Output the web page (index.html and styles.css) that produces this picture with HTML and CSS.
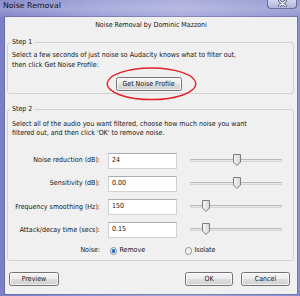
FILE: index.html
```html
<!DOCTYPE html>
<html>
<head>
<meta charset="utf-8">
<link rel="stylesheet" href="styles.css">
</head>
<body>
<div class="window">
  <div class="titlebar">
    <span class="title">Noise Removal</span>
    <div class="close">
      <svg width="9" height="7" viewBox="0 0 9 7"><path d="M1.5 1 L7.5 6 M7.5 1 L1.5 6" stroke="#3a3d5c" stroke-width="2.6" stroke-linecap="round"/><path d="M1.5 1 L7.5 6 M7.5 1 L1.5 6" stroke="#fff" stroke-width="1.3" stroke-linecap="round"/></svg>
    </div>
  </div>
  <div class="client">
    <div class="header">Noise Removal by Dominic Mazzoni</div>

    <fieldset class="group group-step1">
      <legend>Step 1</legend>
      <p class="desc">Select a few seconds of just noise so Audacity knows what to filter out,<br>then click Get Noise Profile:</p>
      <div class="profile-row">
        <span class="highlight">
          <button class="btn btn-profile">Get Noise Profile</button>
          <svg class="ring" width="92" height="34" viewBox="0 0 92 34"><ellipse cx="45.5" cy="16.8" rx="44.3" ry="15.8" fill="none" stroke="#e3212b" stroke-width="1.5"/></svg>
        </span>
      </div>
    </fieldset>

    <fieldset class="group group-step2">
      <legend>Step 2</legend>
      <p class="desc">Select all of the audio you want filtered, choose how much noise you want<br>filtered out, and then click 'OK' to remove noise.</p>
      <div class="controls">
        <label class="lbl">Noise reduction (dB):</label>
        <div class="field">24</div>
        <div class="slider"><div class="track"></div><svg class="thumb" style="left:51%" width="8" height="12" viewBox="0 0 8 12"><defs><linearGradient id="tg" x1="0" y1="0" x2="1" y2="0"><stop offset="0" stop-color="#f6f6f6"/><stop offset="1" stop-color="#d4d4d4"/></linearGradient></defs><path d="M0.5 0.5 H7.5 V8 L4 11.5 L0.5 8 Z" fill="url(#tg)" stroke="#7d7d7d"/></svg></div>

        <label class="lbl">Sensitivity (dB):</label>
        <div class="field">0.00</div>
        <div class="slider"><div class="track"></div><svg class="thumb" style="left:51%" width="8" height="12" viewBox="0 0 8 12"><path d="M0.5 0.5 H7.5 V8 L4 11.5 L0.5 8 Z" fill="url(#tg)" stroke="#7d7d7d"/></svg></div>

        <label class="lbl">Frequency smoothing (Hz):</label>
        <div class="field">150</div>
        <div class="slider"><div class="track"></div><svg class="thumb" style="left:17%" width="8" height="12" viewBox="0 0 8 12"><path d="M0.5 0.5 H7.5 V8 L4 11.5 L0.5 8 Z" fill="url(#tg)" stroke="#7d7d7d"/></svg></div>

        <label class="lbl">Attack/decay time (secs):</label>
        <div class="field">0.15</div>
        <div class="slider"><div class="track"></div><svg class="thumb" style="left:17%" width="8" height="12" viewBox="0 0 8 12"><path d="M0.5 0.5 H7.5 V8 L4 11.5 L0.5 8 Z" fill="url(#tg)" stroke="#7d7d7d"/></svg></div>

        <label class="lbl lbl-noise">Noise:</label>
        <div class="radios">
          <span class="opt opt-remove"><span class="radio checked"></span>Remove</span>
          <span class="opt"><span class="radio"></span>Isolate</span>
        </div>
      </div>
    </fieldset>

    <div class="buttons">
      <button class="btn btn-preview">Preview</button>
      <div class="spacer"></div>
      <button class="btn btn-ok">OK</button>
      <button class="btn btn-cancel">Cancel</button>
    </div>
  </div>
</div>
</body>
</html>
```

FILE: styles.css
```css
* { box-sizing: border-box; }
html, body { margin: 0; padding: 0; }
body {
  width: 300px;
  height: 296px;
  overflow: hidden;
  font-family: "DejaVu Sans Condensed", "DejaVu Sans", sans-serif;
  font-stretch: condensed;
  font-size: 7px;
  color: #151515;
}
.window {
  width: 300px;
  height: 296px;
  display: flex;
  flex-direction: column;
  background: linear-gradient(90deg, #7b7fc4 0%, #989cd6 35%, #a4a7da 60%, #8b8fcd 100%);
}
.titlebar {
  height: 17px;
  flex: none;
  display: flex;
  justify-content: space-between;
  align-items: flex-start;
  padding: 0 3px 0 3px;
  background: linear-gradient(180deg, rgba(255,255,255,0.10), rgba(255,255,255,0.22) 50%, rgba(255,255,255,0.05));
}
.title {
  font-family: "DejaVu Sans", sans-serif;
  font-stretch: normal;
  font-size: 7.8px;
  line-height: 10px;
  padding-top: 1px;
  color: #101018;
}
.close {
  width: 30px;
  height: 10px;
  margin-top: -1px;
  border: 1px solid rgba(45, 45, 90, 0.6);
  border-top: none;
  border-radius: 0 0 4px 4px;
  background: linear-gradient(180deg, #d8daf0, #b0b3dc);
  display: flex;
  align-items: center;
  justify-content: center;
}
.client {
  flex: 1;
  margin: 0 3px 2px 5px;
  background: #f0f0f0;
  display: flex;
  flex-direction: column;
  box-shadow: 0 0 0 1px rgba(70, 70, 120, 0.35);
}
.header {
  text-align: center;
  padding-top: 3.5px;
  line-height: 9px;
}
.group {
  margin: 0 3px 0 2px;
  border: 1px solid #d3d3d3;
  border-radius: 3px;
  padding: 0 11px 0 4px;
  min-width: 0;
}
.group legend {
  padding: 0 2px;
  margin-left: -2px;
  line-height: 9px;
}
.group-step1 {
  margin-top: 8px;
  padding-top: 4.5px;
  padding-bottom: 2px;
}
.group-step2 {
  margin-top: 11px;
  padding-top: 6px;
  padding-bottom: 4px;
}
.desc {
  margin: 0;
  line-height: 9.5px;
  white-space: nowrap;
}
.profile-row {
  margin-top: 6.75px;
  display: flex;
  justify-content: center;
}
.highlight {
  position: relative;
  display: inline-block;
  margin-left: 3px;
}
.ring {
  position: absolute;
  left: -10px;
  top: -10px;
}
.btn {
  font-family: inherit;
  font-stretch: inherit;
  font-size: 7px;
  color: #151515;
  height: 14px;
  padding: 0;
  border: 1px solid #737373;
  border-radius: 2.5px;
  background: linear-gradient(180deg, #f4f4f4 0%, #ececec 48%, #dedede 52%, #d0d0d0 100%);
  box-shadow: inset 0 0 0 1px rgba(255,255,255,0.7);
  display: block;
}
.btn-profile { width: 66px; }
.controls {
  margin-top: 13.75px;
  display: grid;
  grid-template-columns: 88px 69px 92px;
  column-gap: 8px;
  row-gap: 7.33px;
  align-items: center;
}
.controls > .slider { margin-left: 5px; }
.lbl {
  text-align: right;
  white-space: nowrap;
  line-height: 9px;
}
.field {
  height: 16px;
  background: #fff;
  border: 1px solid #cfd1d7;
  border-top-color: #abadb3;
  padding-left: 3px;
  line-height: 13px;
}
.slider {
  position: relative;
  height: 16px;
  width: 92px;
}
.track {
  margin-top: 6px;
  height: 3px;
  border: 1px solid #d6d6d6;
  border-top-color: #b8b8b8;
  background: #e8eaea;
  border-radius: 1px;
}
.thumb {
  position: absolute;
  top: 1px;
  margin-left: -4px;
}
.radios {
  grid-column: 2 / span 2;
  display: flex;
  align-items: center;
  height: 10px;
  padding-left: 1.5px;
}
.opt {
  display: flex;
  align-items: center;
  gap: 2.5px;
  line-height: 9px;
}
.opt-remove { width: 75px; }
.radio {
  width: 7.5px;
  height: 7.5px;
  border-radius: 50%;
  border: 1px solid #8f9090;
  background: radial-gradient(circle, #e6e6e6 0%, #f8f8f8 70%);
}
.radio.checked {
  background: radial-gradient(circle, #1c5fa8 0%, #3b86cf 45%, #e8eef3 55%, #f5f5f5 100%);
}
.buttons {
  margin-top: 11px;
  display: flex;
  padding: 0 7px 0 4px;
  gap: 8px;
}
.spacer { flex: 1; }
.btn-preview { width: 50px; }
.btn-ok { width: 48px; }
.btn-cancel { width: 49px; }
```
